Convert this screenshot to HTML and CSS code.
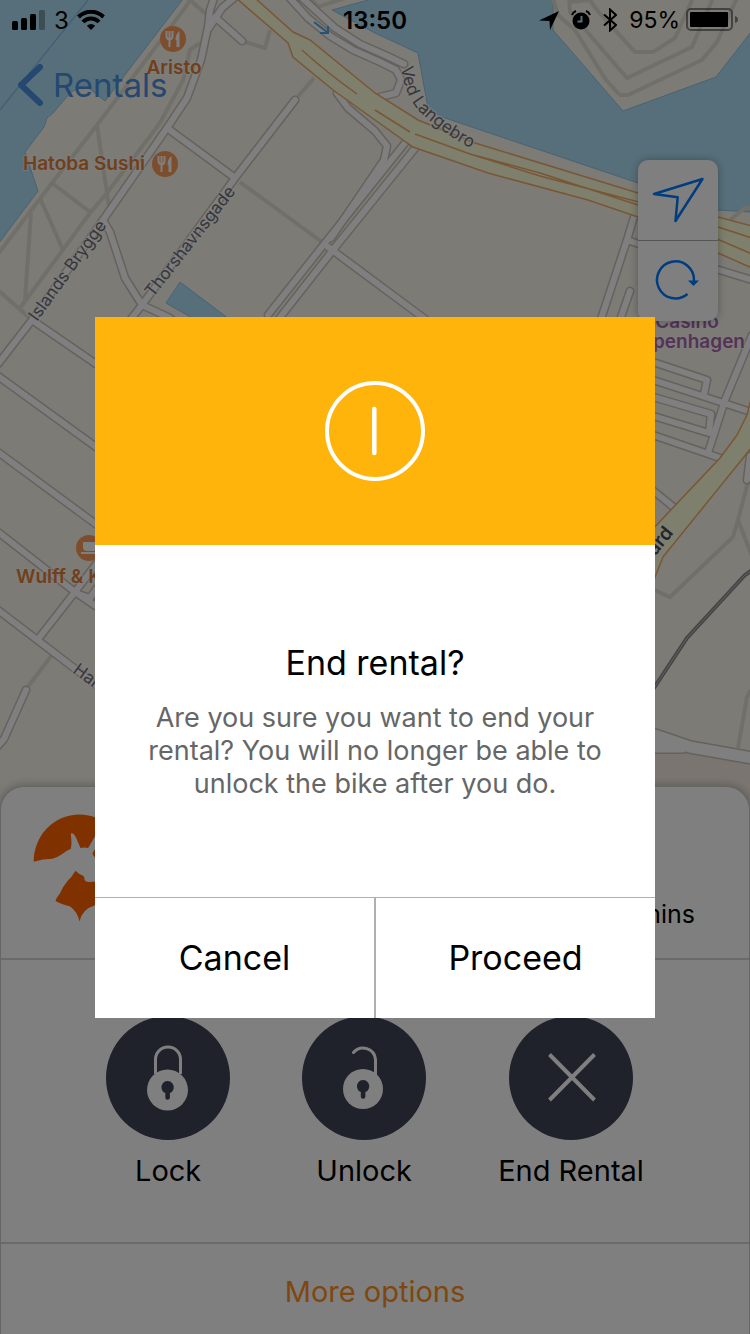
FILE: index.html
```html
<!DOCTYPE html>
<html lang="en">
<head>
  <meta charset="UTF-8" />
  <meta name="viewport" content="width=device-width, initial-scale=1.0"/>
  <title>End rental</title>
  <link rel="stylesheet" href="styles.css">
</head>
<body>
  <div class="app">
    <svg class="map" viewBox="0 0 750 1334" preserveAspectRatio="xMidYMin slice" aria-hidden="true">
      <defs>
        <g id="food">
          <circle r="13" fill="#fa9d5c"/>
          <path d="M-6.500-8v5q0 3 3 3.500M-.5-8v5q0 3-3 3.500M-3.500-8V8" fill="none" stroke="#fff" stroke-width="2"/>
          <path d="M6.500-8q-4 3-4 9h1v7h3z" fill="#fff"/>
        </g>
        <path id="ved" d="M401 67Q405 96 420 112Q442 133 474 150"/>
        <!-- white streets, drawn twice: casing first, then fill -->
        <g id="streets">
          <path d="M214-2L210 10L208 27L201 60L187 98L167 128L103 220L32 320L-2 364"/>
          <path d="M234-2L222 8L209 28M215 17L242 41"/>
          <path d="M167 128L235 178M295 100L235 178L142 305L120 333M103 220L110 232L125 278L142 305L168 317L200 340"/>
          <path d="M405 143L325 243L268 315M416 147L333 250L278 320M328 247L425 319"/>
          <path d="M337 93L348 108L375 131L387 146L384 160L331 238"/>
          <path d="M288-4L308 18L330 36L353 50L380 62L396 70L401 80L396 93L380 97M300-4L335 28L360 44L385 55L404 64"/>
          <path d="M32 320L96 364M-2 376L96 447M-2 452L97 525M-2 532L75 592L97 607M-2 610L74 668L100 688"/>
          <path d="M97 563L75 592L39 638M78 594L90 598L97 588M26 690L4 739L-4 748"/>
          <path d="M634 217L627 240L601 319M627 240L642 245M630 291L620 320M716 269L752 280"/>
          <path d="M752 335L725 400L708 453M650 361L707 380L704 394M650 379L748 411M650 396L711 414L709 433L650 415M650 434L720 458M650 488L677 510M750 456L747 480"/>
        </g>
      </defs>
      <rect width="750" height="1334" fill="#faf6eb"/>
      <path d="M640 754L692 752L750 763V1334H640z" fill="#f5ebe0"/>
      <g fill="#aedff4" stroke="#8fc4ea" stroke-width="1">
        <path d="M-1-1H183L105 101L85 85L71 92L53 113L47 118L44 127L25 152L38 191L-1 243z"/>
        <path d="M332 10L372-1H553V30L623 111L716 77L751 32V212L718 210L638 183L442 117L428 108L418 53L375 33z"/>
        <path d="M180 282L166 303L215 331L245 331z"/>
      </g>
      <path d="M88 0L0 110" stroke="#84c1f0" stroke-width="1.500"/>
      <!-- footpaths -->
      <g class="paths">
        <path d="M191-2L185 8L97 125L52 183L-2 254M190 0L207 15M97 125L109 207M52 183L90 212"/>
        <path d="M200 43L190 50L183 80L160 123L107 193L90 213L20 308M-2 290L32 320M31 213L25 300M40 198L63 250"/>
        <path d="M242 41L265 48L270 30M295 100L314 78M240 182L326 245M312 0L318 7L345-2"/>
        <path d="M553-2L558 15L575 30L606 80L620 95L628 95L702 60L717 42L737-2M569-2L570 12L627 78L692 47L713-2M570 2L590 0L597 10L635 52L653 52L675 38L693-2"/>
        <path d="M730 220L745 208H752M752 470L747 486L738 520L733 537L670 597L650 588M738 520L752 556M52 655L27 688M751 690L747 697L738 748"/>
      </g>
      <use href="#streets" class="casing"/>
      <use href="#streets" class="fill"/>
      <g class="wide">
        <path class="casing" d="M640 730L690 747L752 758M640 747H682"/>
        <path class="fill" d="M640 730L690 747L752 758M640 747H682"/>
      </g>
      <!-- main roads -->
      <g fill="#fcffd8" stroke="#f2ad6c" stroke-width="1.500">
        <path d="M236-2L288 43L293 57L333 90L375 120L413 147L488 173L588 200L638 217L718 253L752 268V226L718 217L638 193L475 143L418 120L375 93L310 40L293 32L255-2z"/>
        <path d="M752 395L747 415L737 435L720 458L650 532V590L663 557L752 447z"/>
        <path d="M302 50Q326 72 357 94M375 110L410 132M415 134L470 154L540 173L638 205L752 254M470 154L540 176L650 205L752 238" fill="none"/>
      </g>
      <path d="M755 568L745 575L687 638L650 694" fill="none" stroke="#8c8a8c" stroke-width="4"/>
      <path d="M755 568L745 575L687 638L650 694" fill="none" stroke="#c4c2c2" stroke-width="1"/>
      <path d="M314 22L327 32M328 26V33H320" fill="none" stroke="#4fa9e6" stroke-width="2"/>
      <g class="street-name">
        <text transform="translate(37 322) rotate(-54)">Islands Brygge</text>
        <text transform="translate(153 298) rotate(-52)">Thorshavnsgade</text>
        <text><textPath href="#ved">Ved Langebro</textPath></text>
        <text transform="translate(72 672) rotate(36)">Hambrosgade</text>
        <text class="main-road" text-anchor="end" transform="translate(674 533) rotate(-51)">Boulevard</text>
      </g>
      <use href="#food" x="173" y="39"/>
      <use href="#food" x="165" y="164"/>
      <circle cx="89" cy="548" r="13" fill="#fa9d5c"/>
      <path d="M83 542H97V547Q97 551 93 551H87Q83 551 83 547zM81 552H98V554H81z" fill="#fff"/>
      <g class="place">
        <text x="174" y="74" text-anchor="middle">Aristo</text>
        <text x="145" y="170" text-anchor="end">Hatoba Sushi</text>
        <text x="16" y="583">Wulff &amp; Konstali</text>
      </g>
      <g class="place casino">
        <text x="687" y="328" text-anchor="middle">Casino</text>
        <text x="745" y="348" text-anchor="end">Copenhagen</text>
      </g>
    </svg>

    <header class="status">
      <div class="status-left">
        <svg width="34" height="20" viewBox="0 0 34 20" aria-hidden="true">
          <rect y="11" width="6" height="9" rx="1.500"/>
          <rect x="9" y="8" width="6" height="12" rx="1.500"/>
          <rect x="18" y="4" width="6" height="16" rx="1.500"/>
          <rect x="27" width="6" height="20" rx="1.500" opacity=".3"/>
        </svg>
        <span>3</span>
        <svg width="28" height="20" viewBox="0 0 28 20" aria-hidden="true">
          <path d="M1.500 7a17.500 17.500 0 0 1 25 0M6 12a11 11 0 0 1 16 0" fill="none" stroke="#000" stroke-width="4"/>
          <path d="M14 20l-4.200-4.200q4.200-3.600 8.400 0z"/>
        </svg>
      </div>
      <time class="clock">13:50</time>
      <div class="status-right">
        <svg width="20" height="20" viewBox="0 0 20 20" aria-hidden="true"><path d="M20 1L0 10.500l10.500.5.500 9z"/></svg>
        <svg width="20" height="20" viewBox="0 0 20 20" aria-hidden="true">
          <circle cx="10" cy="11" r="8.500"/>
          <path d="M1 5q1-3 4-4M19 5q-1-3-4-4" fill="none" stroke="#000" stroke-width="2"/>
          <path d="M10.500 6v5.500H6.500" fill="none" stroke="#aedff4" stroke-width="2"/>
        </svg>
        <svg width="14" height="24" viewBox="0 0 14 24" aria-hidden="true"><path d="M1 6.500l12 10.500-6 5.500v-21l6 5.500L1 17.500" fill="none" stroke="#000" stroke-width="2"/></svg>
        <div class="battery">
          <span>95%</span>
          <svg width="52" height="24" viewBox="0 0 52 24" aria-hidden="true">
            <rect x="1" y="1" width="45" height="21" rx="4" fill="none" stroke="#000" stroke-opacity=".45" stroke-width="2"/>
            <rect x="4" y="4" width="38" height="15" rx="1"/>
            <path d="M49 8q3 1 3 3.500T49 15z" opacity=".45"/>
          </svg>
        </div>
      </div>
    </header>

    <nav class="nav">
      <a class="back" href="#">
        <svg width="25" height="42" viewBox="0 0 25 42" aria-hidden="true"><path d="M22 3L3 21l19 18" fill="none" stroke="#4a90e2" stroke-width="6" stroke-linecap="round" stroke-linejoin="round"/></svg>
        Rentals
      </a>
    </nav>

    <main class="map-area">
      <div class="controls">
        <button type="button" aria-label="My location">
          <svg width="80" height="80" viewBox="0 0 80 80"><path d="M64.500 19L16 34l23.700 3.300L37.500 61z" fill="none" stroke="#007aff" stroke-width="2.500" stroke-linejoin="round"/></svg>
        </button>
        <button type="button" aria-label="Refresh">
          <svg width="80" height="80" viewBox="0 0 80 80">
            <path d="M49.500 53A18.500 18.500 0 1 1 56 40" fill="none" stroke="#007aff" stroke-width="2.500"/>
            <path d="M50 39.500h11L55.500 45z" fill="#007aff"/>
          </svg>
        </button>
      </div>
    </main>

    <section class="panel">
      <div class="bike">
        <svg width="93" height="108" viewBox="100 100 280 324" aria-hidden="true">
          <path fill="#ff6400" d="M102 243A138 141 0 0 1 240 101A138 141 0 0 1 378 243L300 238Q284 232 279 218L287 204L288 164L266 202Q254 198 243 202L230 172Q222 154 214 158L216 188L214 204Q200 210 188 220Q170 232 158 234Q130 234 102 243z"/>
          <path fill="#ff6400" d="M228 270Q238 280 248 284Q256 288 255 298Q260 305 270 304L300 302L312 362L285 375Q248 386 240 423Q234 394 212 378Q184 370 168 362Q168 354 180 340Q190 318 205 300Q216 290 228 270z"/>
        </svg>
        <span class="duration">mins</span>
      </div>
      <div class="actions">
        <button type="button" class="action">
          <svg width="124" height="124" viewBox="0 0 124 124" aria-hidden="true">
            <circle cx="62" cy="62" r="62" fill="#3e4356"/>
            <path d="M49.500 58V43.500a12.500 12.500 0 0 1 25 0V58" fill="none" stroke="#fff" stroke-width="3"/>
            <circle cx="61.500" cy="74" r="20.500" fill="#fff"/>
            <path d="M59.300 77a6.200 6.200 0 1 1 4.600 0v4.500a2.300 2.300 0 0 1-4.600 0z" fill="#3e4356"/>
          </svg>
          Lock
        </button>
        <button type="button" class="action">
          <svg width="124" height="124" viewBox="0 0 124 124" aria-hidden="true">
            <circle cx="62" cy="62" r="62" fill="#3e4356"/>
            <path d="M51.500 36.500A12.500 12.500 0 0 1 73.500 43.500V58" fill="none" stroke="#fff" stroke-width="3" stroke-linecap="round"/>
            <circle cx="61" cy="73" r="20" fill="#fff"/>
            <path d="M58.800 76a6.200 6.200 0 1 1 4.600 0v4.500a2.300 2.300 0 0 1-4.600 0z" fill="#3e4356"/>
          </svg>
          Unlock
        </button>
        <button type="button" class="action">
          <svg width="124" height="124" viewBox="0 0 124 124" aria-hidden="true">
            <circle cx="62" cy="62" r="62" fill="#3e4356"/>
            <path d="M40.500 38.500l45 45.500M85.500 38.500l-45 45.500" stroke="#fff" stroke-width="4"/>
          </svg>
          End Rental
        </button>
      </div>
      <button type="button" class="more">More options</button>
    </section>
  </div>

  <div class="overlay">
    <div class="dialog" role="dialog" aria-modal="true" aria-labelledby="title">
      <div class="dialog-icon">
        <svg width="100" height="100" viewBox="0 0 100 100" aria-hidden="true">
          <circle cx="50" cy="50" r="48" fill="none" stroke="#fff" stroke-width="4"/>
          <path d="M49.300 28v44" stroke="#fff" stroke-width="4.500" stroke-linecap="round"/>
        </svg>
      </div>
      <div class="dialog-body">
        <h1 id="title">End rental?</h1>
        <p>Are you sure you want to end your rental? You will no longer be able to unlock the bike after you do.</p>
      </div>
      <div class="dialog-buttons">
        <button type="button">Cancel</button>
        <button type="button">Proceed</button>
      </div>
    </div>
  </div>
</body>
</html>
```
FILE: styles.css
```css
* {
  box-sizing: border-box;
}
body {
  margin: 0;
  font-family: Inter, "Liberation Sans", sans-serif;
  color: #000;
}
button {
  margin: 0;
  padding: 0;
  border: none;
  background: none;
  font-family: inherit;
  color: inherit;
  cursor: pointer;
}
svg {
  display: block;
  flex: none;
}
.app {
  position: relative;
  display: flex;
  flex-direction: column;
  min-height: 100vh;
  overflow: hidden;
}

/* map */
.map {
  position: absolute;
  top: 0;
  left: 0;
  width: 100%;
  height: 100%;
}
.paths {
  fill: none;
  stroke: #e3dfd5;
  stroke-width: 4;
}
.casing {
  fill: none;
  stroke: #cbc3b9;
  stroke-width: 9;
  stroke-linecap: round;
  stroke-linejoin: round;
}
.fill {
  fill: none;
  stroke: #fff;
  stroke-width: 6;
  stroke-linecap: round;
  stroke-linejoin: round;
}
.wide .casing {
  stroke-width: 14;
}
.wide .fill {
  stroke-width: 11;
}
.street-name {
  font-size: 17px;
  fill: #6e6e74;
  stroke: #fff;
  stroke-opacity: .6;
  stroke-width: 3;
  paint-order: stroke;
}
.main-road {
  font-size: 19px;
  font-weight: 600;
  fill: #4a4a4e;
}
.place {
  font-size: 19px;
  font-weight: 600;
  fill: #e07f38;
  stroke: #fff;
  stroke-opacity: .6;
  stroke-width: 2;
  paint-order: stroke;
}
.casino {
  fill: #a866ae;
}

/* top bars */
.status,
.nav,
.map-area,
.panel {
  position: relative;
}
.status {
  display: grid;
  grid-template-columns: 1fr auto 1fr;
  align-items: center;
  height: 40px;
  padding: 0 12px;
  font-size: 24px;
}
.status-left,
.status-right,
.battery {
  display: flex;
  align-items: center;
}
.status-left {
  gap: 8px;
}
.status-right {
  gap: 12px;
  justify-content: flex-end;
}
.battery {
  gap: 6px;
}
.battery span {
  font-size: 23px;
}
.clock {
  font-weight: 600;
}
.nav {
  height: 90px;
  padding: 0 18px;
  display: flex;
  align-items: center;
}
.back {
  display: flex;
  align-items: center;
  gap: 10px;
  font-size: 33px;
  color: #4a90e2;
  text-decoration: none;
}
.map-area {
  flex: 1;
  padding: 30px 32px;
}
.controls {
  width: 80px;
  margin-left: auto;
  background: #fff;
  border-radius: 10px;
  box-shadow: 0 0 8px rgba(0, 0, 0, .3);
}
.controls button {
  display: block;
}
.controls button + button {
  border-top: 1px solid #aaa;
}

/* bottom panel */
.panel {
  background: #fff;
  border: 1px solid #ccc;
  border-bottom: none;
  border-radius: 24px 24px 0 0;
  box-shadow: 0 0 10px rgba(0, 0, 0, .3);
}
.bike {
  display: flex;
  justify-content: space-between;
  height: 173px;
  padding: 27px 54px 26px 32px;
  border-bottom: 2px solid #d4d4d4;
}
.duration {
  align-self: flex-end;
  font-size: 25px;
  line-height: 36px;
}
.actions {
  display: flex;
  justify-content: center;
  gap: 72px;
  height: 284px;
  padding-top: 56px;
  border-bottom: 2px solid #d4d4d4;
}
.action {
  display: flex;
  flex-direction: column;
  align-items: center;
  gap: 13px;
  font-size: 29px;
  line-height: 36px;
}
.more {
  display: block;
  width: 100%;
  height: 90px;
  padding-top: 4px;
  font-size: 29px;
  color: #ff8f20;
}

/* dialog */
.overlay {
  position: fixed;
  inset: 0;
  display: flex;
  align-items: center;
  justify-content: center;
  background: rgba(0, 0, 0, .5);
}
.dialog {
  width: 75%;
  max-width: 560px;
  background: #fff;
}
.dialog-icon {
  display: flex;
  justify-content: center;
  padding: 64px 0;
  background: #ffb40c;
}
.dialog-body {
  padding: 96px 48px 97px;
  text-align: center;
}
h1 {
  margin: 0 0 16px;
  font-size: 34px;
  line-height: 44px;
  font-weight: 400;
}
p {
  margin: 0;
  font-size: 27px;
  line-height: 33px;
  color: #666;
}
.dialog-buttons {
  display: flex;
  border-top: 1px solid #b0b0b0;
}
.dialog-buttons button {
  flex: 1;
  height: 120px;
  font-size: 34px;
}
.dialog-buttons button + button {
  border-left: 2px solid #b0b0b0;
}
```
